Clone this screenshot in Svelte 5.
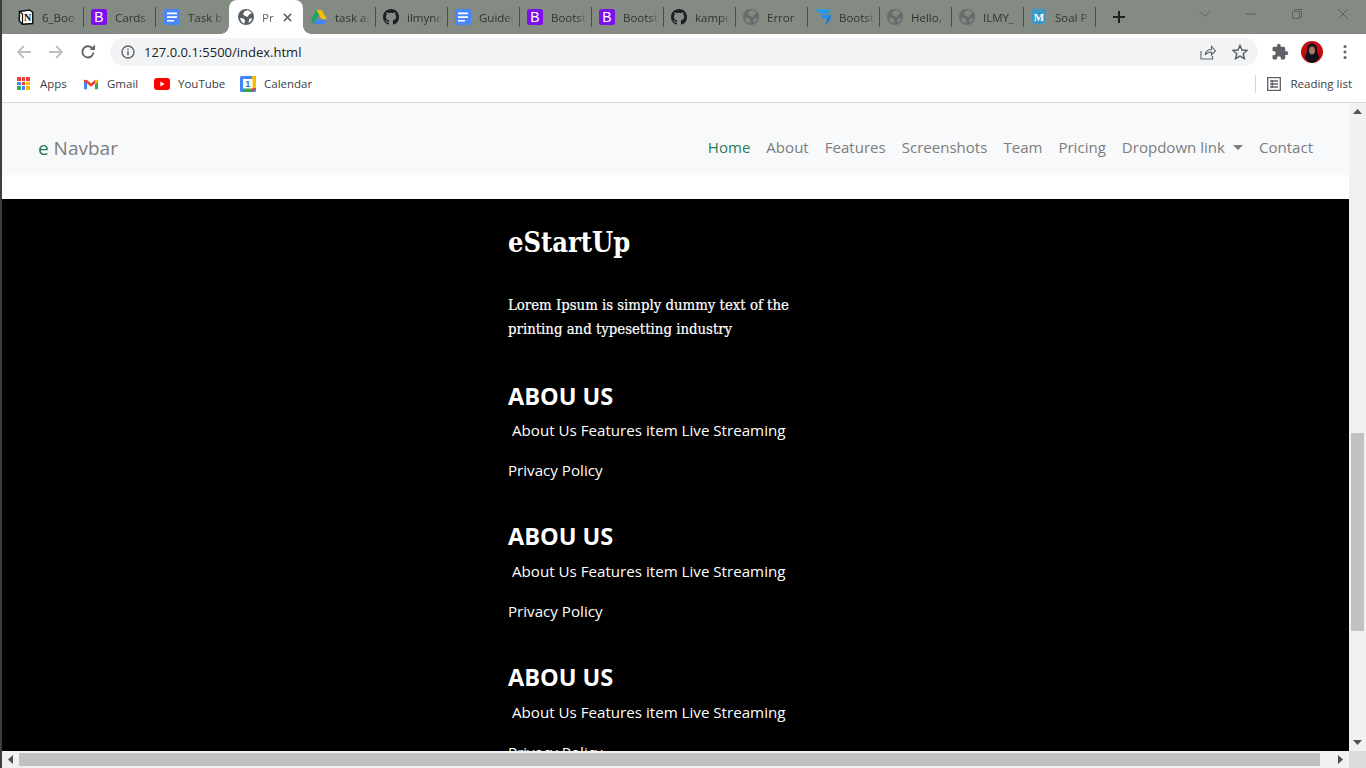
<script>
  const tabs = [
    { icon: 'notion', title: '6_Boo', w: 73 },
    { icon: 'boot', title: 'Cards' },
    { icon: 'docs', title: 'Task b', w: 74 },
    { icon: 'globe', title: 'Pr', w: 74, active: true },
    { icon: 'drive', title: 'task as' },
    { icon: 'github', title: 'ilmyne' },
    { icon: 'docs', title: 'Guidel' },
    { icon: 'boot', title: 'Bootst' },
    { icon: 'boot', title: 'Bootst' },
    { icon: 'github', title: 'kampu' },
    { icon: 'globe', title: 'Error' },
    { icon: 'swoosh', title: 'Bootst' },
    { icon: 'globe', title: 'Hello,' },
    { icon: 'globe', title: 'ILMY_' },
    { icon: 'shield', title: 'Soal P' }
  ];

  const links = ['About', 'Features', 'Screenshots', 'Team', 'Pricing'];
  const blocks = [1, 2, 3];
  const appColors = ['#ea4335', '#ea4335', '#ea4335', '#4285f4', '#ea4335', '#fbbc04', '#34a853', '#4285f4', '#fbbc04'];
</script>

{#snippet favicon(name, active)}
  {#if name === 'notion'}
    <svg class="fav" viewBox="0 0 16 16">
      <path d="M1.500 2.500 11.500 1 14.700 3.200V14.500L4.500 15.300 1.300 12z" fill="#fff" stroke="#111" stroke-width="1.500" />
      <path d="M1.500 2.500 4.500 5V15" fill="none" stroke="#111" stroke-width="1.200" />
      <text x="9.600" y="12.400" class="fav-n">N</text>
    </svg>
  {:else if name === 'boot'}
    <svg class="fav" viewBox="0 0 16 16">
      <rect width="16" height="16" rx="2.500" fill="#7b10ec" />
      <text x="8" y="13" class="fav-b">B</text>
    </svg>
  {:else if name === 'docs'}
    <svg class="fav" viewBox="0 0 16 16">
      <rect width="16" height="16" rx="2" fill="#4a86f7" />
      <path d="M3 3.500h10v1.700H3zM3 7.200h10v1.700H3zM3 10.900h7v1.700H3z" fill="#fff" />
    </svg>
  {:else if name === 'globe'}
    <svg class="fav" viewBox="0 0 16 16">
      <circle cx="8" cy="8" r="8" fill={active ? '#5a5e63' : '#666b6c'} />
      <path d="M9 1.200c2 .3 3.700 1.300 4.800 2.800L11 5.500 9.800 8 6.600 6.800 5 5 6.500 2.200zM2 9l3.500.6 1.500 1.600-.6 3.400C4.300 14.100 2.500 12 2 9zM11 10l3-1c-.2 2.200-1.400 4-3.300 5z" fill={active ? '#fff' : '#848b82'} />
    </svg>
  {:else if name === 'drive'}
    <svg class="fav" viewBox="0 0 16 16">
      <path d="M5.400 1h5.200L16 10.400h-5.200z" fill="#fbbc04" />
      <path d="M5.400 1 0 10.400l2.600 4.500L8 5.500z" fill="#1fa463" />
      <path d="M2.600 14.900h10.800l2.600-4.500H5.300z" fill="#4285f4" />
    </svg>
  {:else if name === 'github'}
    <svg class="fav" viewBox="0 0 16 16">
      <path fill="#1b1f23" d="M8 0C3.580 0 0 3.580 0 8c0 3.540 2.290 6.530 5.470 7.590.4.070.55-.17.55-.38 0-.19-.01-.82-.01-1.490-2.010.37-2.530-.49-2.690-.94-.09-.23-.48-.94-.82-1.130-.28-.15-.68-.52-.01-.53.63-.01 1.080.58 1.230.82.72 1.210 1.870.87 2.330.66.070-.52.28-.87.51-1.070-1.780-.2-3.640-.89-3.640-3.950 0-.87.31-1.590.82-2.150-.08-.2-.36-1.020.08-2.120 0 0 .67-.21 2.200.82.64-.18 1.320-.27 2-.27.68 0 1.360.09 2 .27 1.530-1.040 2.200-.82 2.200-.82.44 1.100.16 1.920.08 2.120.51.56.82 1.270.82 2.150 0 3.070-1.870 3.750-3.650 3.950.29.25.54.73.54 1.480 0 1.070-.01 1.930-.01 2.200 0 .21.15.46.55.38A8.013 8.013 0 0016 8c0-4.420-3.580-8-8-8z" />
    </svg>
  {:else if name === 'swoosh'}
    <svg class="fav" viewBox="0 0 16 16">
      <path d="M0 .500h15.500l-2 4H5.500z" fill="#1e9bf0" />
      <path d="M5 6h10.500L13 10H8z" fill="#2a8fe8" />
      <path d="M15.500 5.500c.8 4-1.500 8.500-5.500 10.500 1.500-2 2-4 1.800-6z" fill="#0d7fdc" />
    </svg>
  {:else}
    <svg class="fav" viewBox="0 0 16 16">
      <path d="M1 0h14v13.500l-7 2.500-7-2.500z" fill="#3d97c9" />
      <text x="8" y="11.500" class="fav-m">M</text>
    </svg>
  {/if}
{/snippet}

<div class="screen">
  <header class="tabstrip">
    {#each tabs as tab}
      <div class="tab" class:active={tab.active} class:wide={tab.w === 74} class:first={tab.w === 73}>
        <span class="tab-icon">{@render favicon(tab.icon, tab.active)}</span>
        <span class="tab-title">{tab.title}</span>
        {#if tab.active}
          <svg class="tab-close" viewBox="0 0 10 10"><path d="M1 1l8 8M9 1l-8 8" /></svg>
        {/if}
      </div>
    {/each}
    <svg class="new-tab" viewBox="0 0 12 12"><path d="M6 0v12M0 6h12" /></svg>
    <div class="win-controls">
      <svg class="win" viewBox="0 0 12 12"><path d="M1 3.500l5 5 5-5" /></svg>
      <svg class="win" viewBox="0 0 12 12"><path d="M1 6h10" /></svg>
      <svg class="win" viewBox="0 0 12 12"><path d="M1.500 3.500h7v7h-7zM3.500 3.500v-2h7v7h-2" /></svg>
      <svg class="win" viewBox="0 0 12 12"><path d="M1 1l10 10M11 1L1 11" /></svg>
    </div>
  </header>

  <div class="framed">
    <div class="toolbar">
      <svg class="nav-arrow" viewBox="0 0 16 16"><path d="M15 8H2M8 2 2 8l6 6" /></svg>
      <svg class="nav-arrow" viewBox="0 0 16 16"><path d="M1 8h13M8 2l6 6-6 6" /></svg>
      <svg class="reload" viewBox="0 0 16 16">
        <path d="M13.500 8.500A5.600 5.600 0 1 1 11.800 3.800" fill="none" stroke="#5f6368" stroke-width="1.900" />
        <path d="M9.500 6h5.500V.5z" fill="#5f6368" />
      </svg>
      <div class="omnibox">
        <svg class="info" viewBox="0 0 14 14">
          <circle cx="7" cy="7" r="6" fill="none" stroke="#5f6368" stroke-width="1.400" />
          <path d="M7 6v4.200M7 3.500v1.500" stroke="#5f6368" stroke-width="1.500" />
        </svg>
        <span class="url">127.0.0.1:5500/index.html</span>
        <svg class="omni-icon share" viewBox="0 0 16 16">
          <path d="M1 7v8h11.500v-3M5 11c.5-3.500 3-5.500 6.500-5.500V2.500L15.500 7l-4 4V8C8.500 8 6.500 9 5 11z" fill="none" stroke="#5f6368" stroke-width="1.100" />
        </svg>
        <svg class="omni-icon star" viewBox="0 0 16 16">
          <path d="M8 1.500l2 4.600 5 .4-3.800 3.300 1.200 4.900L8 12.100l-4.400 2.600 1.200-4.900L1 6.500l5-.4z" fill="none" stroke="#5f6368" stroke-width="1.500" />
        </svg>
      </div>
      <svg class="puzzle" viewBox="0 0 24 24">
        <path d="M20.500 11H19V7c0-1.100-.9-2-2-2h-4V3.500C13 2.120 11.880 1 10.500 1S8 2.120 8 3.500V5H4c-1.100 0-1.990.9-1.990 2v3.800H3.500c1.490 0 2.700 1.210 2.700 2.700s-1.210 2.700-2.700 2.700H2V20c0 1.100.9 2 2 2h3.800v-1.500c0-1.490 1.210-2.700 2.700-2.700 1.490 0 2.700 1.210 2.700 2.700V22H17c1.100 0 2-.9 2-2v-4h1.500c1.380 0 2.500-1.120 2.500-2.500S21.880 11 20.500 11z" fill="#5f6368" />
      </svg>
      <svg class="avatar" viewBox="0 0 22 22">
        <circle cx="11" cy="11" r="11" fill="#c40d12" />
        <path d="M11 2.500c3.500 0 5 2.700 5 6.500 0 3 1.500 5 2.500 7A11 11 0 0 1 11 22a11 11 0 0 1-7.500-6c1-2 2.500-4 2.500-7 0-3.800 1.500-6.500 5-6.500z" fill="#12101a" />
        <ellipse cx="11" cy="9.500" rx="3" ry="4" fill="#a97a68" />
      </svg>
      <svg class="dots" viewBox="0 0 4 16"><circle cx="2" cy="2.500" r="1.500" /><circle cx="2" cy="8" r="1.500" /><circle cx="2" cy="13.500" r="1.500" /></svg>
    </div>

    <div class="bookmarks">
      <div class="mark apps">
        <div class="app-grid">
          {#each appColors as color}
            <i style="background: {color}"></i>
          {/each}
        </div>
        <span>Apps</span>
      </div>
      <div class="mark gmail">
        <svg class="mark-icon" viewBox="0 0 16 12">
          <path d="M0 2v10h3.500V5z" fill="#4285f4" />
          <path d="M16 2v10h-3.500V5z" fill="#34a853" />
          <path d="M12.500 1.500 16 1v3l-3.500 2.500z" fill="#fbbc04" />
          <path d="M0 1l3.500.5L8 5l4.500-3.500v4L8 9 3.500 5.500 0 3z" fill="#ea4335" />
        </svg>
        <span>Gmail</span>
      </div>
      <div class="mark youtube">
        <svg class="mark-icon" viewBox="0 0 16 12">
          <rect width="16" height="12" rx="3" fill="#f00" />
          <path d="M6.400 3.500v5L10.500 6z" fill="#fff" />
        </svg>
        <span>YouTube</span>
      </div>
      <div class="mark calendar">
        <svg class="mark-icon cal" viewBox="0 0 16 16">
          <rect width="16" height="16" rx="1.500" fill="#4285f4" />
          <path d="M12 0h2.500A1.500 1.500 0 0 1 16 1.500V12h-4z" fill="#fbbc04" />
          <path d="M12 12h4l-4 4z" fill="#ea4335" />
          <path d="M3 12h9v4H3z" fill="#34a853" />
          <rect x="3" y="3" width="9.500" height="9.500" fill="#fff" />
          <text x="7.800" y="11.200" class="cal-num">1</text>
        </svg>
        <span>Calendar</span>
      </div>
      <div class="reading">
        <svg class="reading-icon" viewBox="0 0 14 14">
          <path d="M.7.700h12.600v12.600H.7zM3 4h8M3 7h8M3 10h8M5.200 3v8" fill="none" stroke="#5f6368" stroke-width="1.300" />
        </svg>
        <span>Reading list</span>
      </div>
    </div>

    <div class="viewport">
      <div class="page-area">
        <main class="page">
          <nav class="navbar">
            <a class="brand" href="#top"><span class="brand-e">e</span> Navbar</a>
            <ul class="nav-links">
              <li class="current">Home</li>
              {#each links as link}
                <li>{link}</li>
              {/each}
              <li class="dropdown">Dropdown link</li>
              <li>Contact</li>
            </ul>
          </nav>
          <div class="gap"></div>
          <footer class="footer">
            <h3>eStartUp</h3>
            <p class="lead">Lorem Ipsum is simply dummy text of the<br />printing and typesetting industry</p>
            {#each blocks as block (block)}
              <section class="foot-block">
                <h4>ABOU US</h4>
                <p>&nbsp;About Us Features item Live Streaming</p>
                <p>Privacy Policy</p>
              </section>
            {/each}
          </footer>
        </main>
        <div class="vscroll">
          <svg class="arrow" viewBox="0 0 9 5"><path d="M4.500 0 9 5H0z" /></svg>
          <div class="vtrack"><div class="vthumb"></div></div>
          <svg class="arrow" viewBox="0 0 9 5"><path d="M0 0h9L4.500 5z" /></svg>
        </div>
      </div>
      <div class="hscroll">
        <svg class="arrow-h" viewBox="0 0 5 9"><path d="M5 0v9L0 4.500z" /></svg>
        <div class="htrack"><div class="hthumb"></div></div>
        <svg class="arrow-h" viewBox="0 0 5 9"><path d="M0 0v9l5-4.500z" /></svg>
        <div class="corner"></div>
      </div>
    </div>
  </div>
</div>

<style>
  :global(body) {
    margin: 0;
    overflow: hidden;
  }

  .screen {
    width: 1366px;
    height: 768px;
    box-sizing: border-box;
    padding-left: 2px;
    display: flex;
    flex-direction: column;
    overflow: hidden;
    background: #3b403d;
    font-family: "Open Sans", "Noto Sans", sans-serif;
  }

  .tabstrip {
    height: 34px;
    flex-shrink: 0;
    display: flex;
    align-items: stretch;
    padding-left: 9px;
    background: #848b82;
  }

  .tab {
    position: relative;
    width: 72px;
    box-sizing: border-box;
    display: flex;
    align-items: center;
    padding-left: 7px;
    font-size: 11.5px;
    color: #333;
  }

  .tab.first {
    width: 73px;
  }

  .tab.wide {
    width: 74px;
    padding-left: 8px;
  }

  .tab::after {
    content: "";
    position: absolute;
    right: 0;
    top: 7px;
    height: 20px;
    width: 1px;
    background: #4a4f4b;
  }

  .tab.active {
    background: #fff;
    border-radius: 8px 8px 0 0;
    margin-left: -1px;
    margin-right: 1px;
    padding-left: 9px;
    color: #5f6368;
  }

  .tab.active::before,
  .tab.active::after {
    content: "";
    position: absolute;
    top: auto;
    bottom: 0;
    width: 8px;
    height: 8px;
    background: radial-gradient(circle at 0 0, transparent 7.5px, #fff 8px);
  }

  .tab.active::before {
    left: -8px;
    right: auto;
    background: radial-gradient(circle at 0 0, transparent 7.5px, #fff 8px);
  }

  .tab.active::after {
    right: -8px;
    background: radial-gradient(circle at 100% 0, transparent 7.5px, #fff 8px);
  }

  .tab-icon {
    width: 16px;
    height: 16px;
    flex-shrink: 0;
  }

  .fav {
    display: block;
    width: 16px;
    height: 16px;
  }

  .fav-n,
  .fav-b,
  .fav-m,
  .cal-num {
    text-anchor: middle;
    font-family: "Liberation Sans", sans-serif;
  }

  .fav-n {
    font-size: 10px;
    font-weight: 700;
    font-family: "Liberation Serif", serif;
    fill: #111;
  }

  .fav-b {
    font-size: 14px;
    fill: #fff;
  }

  .fav-m {
    font-size: 11px;
    font-weight: 700;
    font-family: "Liberation Serif", serif;
    fill: #fff;
  }

  .cal-num {
    font-size: 9px;
    font-weight: 700;
    fill: #1a73e8;
  }

  .tab-title {
    margin-left: 8px;
    width: 36px;
    white-space: nowrap;
    overflow: hidden;
    -webkit-mask-image: linear-gradient(to right, #000 72%, transparent);
    mask-image: linear-gradient(to right, #000 72%, transparent);
  }

  .active .tab-title {
    width: 16px;
    flex-shrink: 0;
  }

  .tab-close {
    position: absolute;
    right: 11px;
    top: 13px;
    width: 9px;
    height: 9px;
    fill: none;
    stroke: #5f6368;
    stroke-width: 1.700;
  }

  .new-tab {
    width: 12px;
    height: 12px;
    margin: 11px 0 0 17px;
    fill: none;
    stroke: #202124;
    stroke-width: 2;
  }

  .win-controls {
    display: flex;
    margin-left: 74px;
    gap: 34px;
    padding-top: 8px;
  }

  .win {
    width: 12px;
    height: 12px;
    fill: none;
    stroke: #5b615b;
    stroke-width: 1;
  }

  .framed {
    flex: 1;
    min-height: 0;
    display: flex;
    flex-direction: column;
    background: #fff;
  }

  .toolbar {
    height: 36px;
    flex-shrink: 0;
    display: flex;
    align-items: center;
    padding-left: 14px;
    box-sizing: border-box;
    background: #fff;
  }

  .nav-arrow {
    width: 16px;
    height: 16px;
    margin-right: 16px;
    fill: none;
    stroke: #bdbfc2;
    stroke-width: 1.800;
  }

  .reload {
    width: 16px;
    height: 16px;
    margin-right: 14px;
  }

  .omnibox {
    width: 1148px;
    height: 28px;
    margin-right: 13px;
    box-sizing: border-box;
    display: flex;
    align-items: center;
    padding-left: 11px;
    border-radius: 14px;
    background: #f1f3f4;
  }

  .info {
    width: 14px;
    height: 14px;
  }

  .url {
    margin-left: 9px;
    font-size: 13px;
    color: #202124;
  }

  .omni-icon {
    width: 16px;
    height: 16px;
  }

  .share {
    margin-left: auto;
  }

  .star {
    margin: 0 10px 0 16px;
  }

  .puzzle {
    width: 18px;
    height: 18px;
    margin-right: 12px;
  }

  .avatar {
    width: 22px;
    height: 22px;
  }

  .dots {
    width: 4px;
    height: 16px;
    margin-left: 20px;
    fill: #5f6368;
  }

  .bookmarks {
    height: 33px;
    flex-shrink: 0;
    box-sizing: border-box;
    display: flex;
    align-items: center;
    padding: 0 0 4px 15px;
    font-size: 11.5px;
    color: #3c4043;
    border-bottom: 1px solid #d5d7da;
  }

  .mark {
    display: flex;
    align-items: center;
  }

  .mark span {
    margin: 0 0 2px 8px;
  }

  .apps {
    width: 67px;
  }

  .apps span {
    margin-left: 9px;
  }

  .gmail {
    width: 70px;
  }

  .gmail span {
    margin-left: 9px;
  }

  .gmail .mark-icon {
    width: 14px;
  }

  .youtube {
    width: 86px;
  }

  .calendar {
    width: 100px;
  }

  .app-grid {
    width: 14px;
    height: 14px;
    display: grid;
    grid-template-columns: repeat(3, 3.500px);
    grid-auto-rows: 3.500px;
    gap: 1px;
    padding-right: 1px;
    box-sizing: border-box;
  }

  .mark-icon {
    width: 16px;
    height: 12px;
  }

  .mark-icon.cal {
    height: 16px;
  }

  .reading {
    margin-left: auto;
    display: flex;
    align-items: center;
    height: 18px;
    padding: 0 14px 0 11px;
    border-left: 1px solid #d5d7da;
  }

  .reading span {
    margin-bottom: 2px;
  }

  .reading-icon {
    width: 14px;
    height: 14px;
    margin-right: 9px;
  }

  .viewport {
    flex: 1;
    min-height: 0;
    display: flex;
    flex-direction: column;
  }

  .page-area {
    flex: 1;
    min-height: 0;
    display: flex;
  }

  .page {
    flex: 1;
    min-width: 0;
    overflow: hidden;
    background: #fff;
  }

  .navbar {
    height: 72px;
    box-sizing: border-box;
    display: flex;
    align-items: center;
    justify-content: space-between;
    padding: 16px 36px 0 36px;
    background: #f8f9fa;
  }

  .brand {
    margin-top: 2px;
    font-size: 19px;
    color: #7c7d7e;
    text-decoration: none;
  }

  .brand-e {
    color: #1f7a5c;
  }

  .nav-links {
    display: flex;
    gap: 16px;
    margin: 0;
    padding: 0;
    list-style: none;
    font-size: 15.050px;
    color: #7c7d7e;
  }

  .current {
    color: #2c7a5a;
  }

  .dropdown::after {
    content: "";
    display: inline-block;
    margin-left: 8px;
    vertical-align: 3px;
    border-top: 5px solid #7c7d7e;
    border-left: 5px solid transparent;
    border-right: 5px solid transparent;
  }

  .gap {
    height: 24px;
  }

  .footer {
    padding: 25px 0 40px 506px;
    background: #000;
    color: #fff;
  }

  .footer h3 {
    margin: 0;
    height: 38.400px;
    font-family: "DejaVu Serif Condensed", "DejaVu Serif", serif;
    font-stretch: condensed;
    font-size: 27px;
    font-weight: 700;
    line-height: 38.400px;
  }

  .lead {
    margin: 30.600px 0 40.600px;
    font-family: "DejaVu Serif Condensed", "DejaVu Serif", serif;
    font-stretch: condensed;
    font-size: 14.800px;
    line-height: 24px;
    -webkit-text-stroke: 0.2px #fff;
  }

  .foot-block {
    height: 140.800px;
  }

  .foot-block h4 {
    margin: 0 0 7.600px;
    font-size: 23.500px;
    font-weight: 700;
    line-height: 28.800px;
  }

  .foot-block p {
    margin: 0 0 16px;
    font-size: 15.150px;
    line-height: 24px;
  }

  .vscroll {
    width: 17px;
    flex-shrink: 0;
    display: flex;
    flex-direction: column;
    align-items: center;
    background: #f1f1f1;
  }

  .arrow {
    width: 9px;
    height: 5px;
    flex-shrink: 0;
    margin: 6px 0;
    fill: #505050;
  }

  .vtrack {
    flex: 1;
    width: 100%;
    padding-top: 313px;
    box-sizing: border-box;
  }

  .vthumb {
    height: 198px;
    margin: 0 2px;
    background: #c1c1c1;
  }

  .hscroll {
    height: 17px;
    flex-shrink: 0;
    display: flex;
    align-items: center;
    background: #f1f1f1;
  }

  .arrow-h {
    width: 5px;
    height: 9px;
    flex-shrink: 0;
    margin: 0 6px;
    fill: #505050;
  }

  .htrack {
    flex: 1;
    display: flex;
  }

  .hthumb {
    width: 1301px;
    height: 13px;
    background: #c1c1c1;
  }

  .corner {
    width: 17px;
    height: 17px;
    flex-shrink: 0;
    background: #dcdcdc;
  }
</style>
